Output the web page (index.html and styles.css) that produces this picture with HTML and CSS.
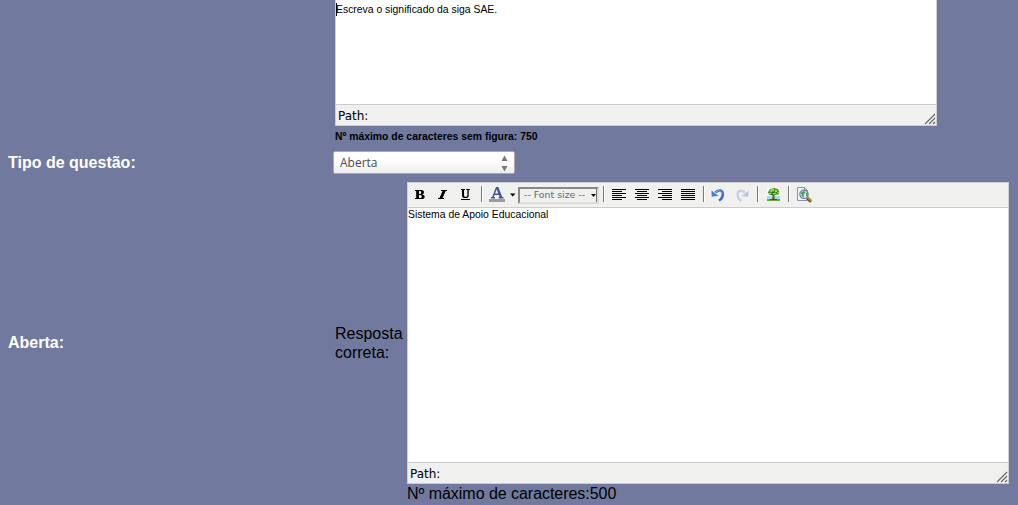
FILE: index.html
```
<!DOCTYPE html>
<html lang="pt-BR">
<head>
<meta charset="utf-8">
<title>Questão</title>
<link rel="stylesheet" href="styles.css">
</head>
<body>
<main class="form">
  <section class="row row-question">
    <div class="label"></div>
    <div class="field">
      <div class="editor editor-question">
        <div class="content"><span class="caret"></span>Escreva o significado da siga SAE.</div>
        <div class="status"><span>Path:</span>
          <svg class="grip" width="12" height="12" viewBox="0 0 12 12"><path d="M0 11L10 1M4 11L10 5M8 11L10 9" stroke="#fff"/><path d="M1 11L11 1M5 11L11 5M9 11L11 9" stroke="#666" stroke-width="1.2"/></svg>
        </div>
      </div>
      <div class="limit-small">Nº máximo de caracteres sem figura: 750</div>
    </div>
  </section>
  <section class="row row-type">
    <div class="label">Tipo de questão:</div>
    <div class="field">
      <div class="select"><span>Aberta</span>
        <svg width="7" height="17" viewBox="0 0 7 17"><path d="M.5 6L3.5 0.5L6.5 6zM.5 11L3.5 16.5L6.5 11z" fill="#777"/></svg>
      </div>
    </div>
  </section>
  <section class="row row-answer">
    <div class="label">Aberta:</div>
    <div class="field answer">
      <div class="answer-label">Resposta correta:</div>
      <div class="answer-body">
        <div class="editor editor-answer">
          <div class="toolbar">
            <svg class="btn" viewBox="0 0 23 24"><path fill-rule="evenodd" d="M7 7H13Q16 7 16 9.3Q16 11 14.2 11.4Q16.7 11.7 16.7 13.7Q16.7 16 13.3 16H7V15H8.2V8H7zM11 8V11H12Q13.3 11 13.3 9.5Q13.3 8 12 8zM11 12V15H12.2Q13.8 15 13.8 13.5Q13.8 12 12.2 12z"/></svg>
            <svg class="btn" viewBox="0 0 23 24"><path d="M10 7H16V8H14.6L11.6 15H13V16H7V15H8.5L11.5 8H10z"/></svg>
            <svg class="btn" viewBox="0 0 23 24"><path d="M7 6H11V7H10V12.2Q10 14 11.8 14Q13.4 14 13.4 12.2V7H12.3V6H15.8V7H14.7V12.4Q14.7 15 11.5 15Q8 15 8 12.4V7H7zM7 16H16V17H7z"/></svg>
            <i class="sep sep-wide"></i>
            <svg class="btn" viewBox="0 0 23 24"><path fill="#9c9c9c" d="M4 16H20V19H4z"/><path fill="#3b5592" fill-rule="evenodd" d="M11 4H13.3L17.2 14H18.5V15.5H13.7V14H14.6L13.9 12H9.5L8.8 14H10V15.5H6V14H7.2zM10 10.5H13.3L11.7 6.2z"/></svg>
            <svg class="drop" viewBox="0 0 10 24"><path d="M2 10.5H7.5L4.7 13.5z"/></svg>
            <div class="font-size"><span>-- Font size --</span><svg width="5" height="3" viewBox="0 0 5 3"><path d="M0 0H5L2.5 3z"/></svg></div>
            <i class="sep sep-wide sep-align"></i>
            <svg class="btn" viewBox="0 0 23 24" shape-rendering="crispEdges"><path d="M4 6.5H18M4 8.5H14M4 10.5H18M4 12.5H14M4 14.5H18M4 16.5H14" stroke="#000"/></svg>
            <svg class="btn" viewBox="0 0 23 24" shape-rendering="crispEdges"><path d="M4 6.5H18M6 8.5H16M4 10.5H18M6 12.5H16M4 14.5H18M6 16.5H16" stroke="#000"/></svg>
            <svg class="btn" viewBox="0 0 23 24" shape-rendering="crispEdges"><path d="M4 6.5H18M8 8.5H18M4 10.5H18M8 12.5H18M4 14.5H18M8 16.5H18" stroke="#000"/></svg>
            <svg class="btn" viewBox="0 0 23 24" shape-rendering="crispEdges"><path d="M4 6.5H18M4 8.5H18M4 10.5H18M4 12.5H18M4 14.5H18M4 16.5H18" stroke="#000"/></svg>
            <i class="sep"></i>
            <svg class="btn" viewBox="0 0 23 24"><path d="M8.5 9.5C11.5 6 15.8 7.3 15.8 11.2C15.8 14 14.5 16 12 17.5" fill="none" stroke="#3c6bc4" stroke-width="2.6"/><path d="M9 9C11.5 6.7 15 7.7 15 11" fill="none" stroke="#83aaf0"/><path fill="#4c7cd3" d="M4.5 7.5L11.5 12.8L4.7 13.8z"/></svg>
            <svg class="btn" viewBox="0 0 23 24"><path d="M15 9.8C12 6.3 7.5 7.5 7.5 11.5C7.5 14.5 9 16.5 11.5 18" fill="none" stroke="#c3cfe3" stroke-width="2.2"/><path fill="#b5c5df" d="M18.5 8L11.5 13L18.3 13.8z"/></svg>
            <i class="sep sep-redo"></i>
            <svg class="btn" viewBox="0 0 23 24"><path fill="#fff" d="M5 5H18V18H5z"/><path fill="#a9d9f5" d="M5 13H18V16H5z"/><path fill="#62ad2f" d="M5 16H18V18H5z"/><path fill="#7d4e24" d="M10.5 11H12.5V15L13.5 16.5H9.5L10.5 15z"/><path fill="#4c9c20" d="M8 6L12 5L16 6L17.5 9L16.5 11.5L13 12L10.5 12.5L7 11.5L5.8 9.5z"/><path fill="#9bdc46" d="M9 6H12V8H10V9H8zM13 7H15V9H13zM11 10H14V11H11zM7 10H9V11H7zM16 9H17V10H15z"/><path fill="#29670c" d="M10 9H12V10H10zM14 9H15V10H14zM9 11H11V12H9zM8 16H15V17H8z"/></svg>
            <i class="sep"></i>
            <svg class="btn btn-preview" viewBox="0 0 23 24"><path fill="#e9f1fa" stroke="#8a96a7" d="M4.5 4.5H11.5L14.5 7.5V17.5H4.5z"/><path fill="#dce5ef" stroke="#8a96a7" d="M11.5 4.500V7.500H14.500z"/><path stroke="#c98c3d" stroke-width="3" stroke-linecap="round" d="M14.500 14.500L17.500 17.500"/><path stroke="#5d4932" stroke-width="1.400" d="M13.500 15.500L17.500 19.300"/><circle cx="11" cy="11.300" r="4.200" fill="#cfe8f5" stroke="#71859c" stroke-width="1.200"/><path fill="#4b9a55" d="M8 9.500L11 8L12.500 9L10.500 11.500L11 14.500L9 13.500zM13 9.500L14.700 10V12.500L13 13.500z"/></svg>
          </div>
          <div class="content">Sistema de Apoio Educacional</div>
          <div class="status"><span>Path:</span>
            <svg class="grip" width="12" height="12" viewBox="0 0 12 12"><path d="M0 11L10 1M4 11L10 5M8 11L10 9" stroke="#fff"/><path d="M1 11L11 1M5 11L11 5M9 11L11 9" stroke="#666" stroke-width="1.2"/></svg>
          </div>
        </div>
        <div class="limit">Nº máximo de caracteres:500</div>
      </div>
    </div>
  </section>
</main>
</body>
</html>
```
FILE: styles.css
```
* { box-sizing: border-box; }
body {
  margin: 0;
  height: 505px;
  overflow: hidden;
  background: #717a9e;
  font: 16px/19px "Liberation Sans", Arial, sans-serif;
  color: #000;
}
.row { display: grid; grid-template-columns: 335px 1fr; align-items: center; }
.row-question { height: 147px; align-items: start; }
.row-type { height: 31px; }
.row-answer { height: 327px; }
.label { padding-left: 8px; font-weight: bold; color: #fff; }
.row-answer .label { padding-top: 1px; }
.editor {
  display: flex;
  flex-direction: column;
  width: 602px;
  border: 1px solid #ccc;
  background: #fff;
}
.editor-question { height: 126px; border-top: 0; }
.editor-answer { height: 302px; }
.content { flex: 1; font-size: 10.4px; line-height: 12px; }
.editor-question .content { padding-top: 4px; }
.editor-answer .content { padding-top: 1px; }
.caret { display: inline-block; width: 1px; height: 13px; margin: -1px -1px -3px 0; background: #000; }
.status {
  display: flex;
  justify-content: space-between;
  align-items: center;
  height: 21px;
  padding: 1px 0 0 2px;
  border-top: 1px solid #ccc;
  background: #f0f0ee;
  font: 12px/16px "DejaVu Sans", sans-serif;
}
.grip { margin: 6px 0 0; }
.limit-small { padding-top: 4px; font-size: 10.4px; line-height: 13px; font-weight: bold; }
.select {
  display: flex;
  align-items: center;
  justify-content: space-between;
  width: 182px;
  height: 23px;
  margin-left: -2px;
  padding: 0 6px;
  border: 1px solid #aaa;
  border-radius: 2px;
  background: linear-gradient(#fff 45%, #ececec);
  color: #4c4c4c;
  font: 12px/20px "Open Sans", sans-serif;
}
.select svg { margin-top: 2px; }
.answer { display: flex; align-items: center; }
.answer-label { width: 72px; padding-top: 3px; }
.answer-body { padding-top: 2px; }
.toolbar {
  display: flex;
  align-items: center;
  height: 25px;
  border-bottom: 1px solid #ccc;
  background: #f0f0ee;
}
.btn { flex: none; width: 23px; height: 24px; }
.btn-preview { margin-left: 1px; }
.drop { flex: none; width: 10px; height: 24px; }
.sep {
  flex: none;
  width: 2px;
  height: 16px;
  margin: 0 2px 3px 3px;
  border-left: 1px solid #777;
  border-right: 1px solid #fff;
}
.sep-wide { margin: 0 2px 3px 4px; }
.sep-align { margin-right: 3px; }
.sep-redo { margin-left: 4px; margin-right: 3px; }
.font-size {
  display: flex;
  align-items: center;
  justify-content: space-between;
  width: 81px;
  height: 17px;
  padding: 0 0 0 4px;
  border: 2px solid;
  border-color: #888 #ddd #ddd #888;
  color: #666;
  font: 9.4px/13px "DejaVu Sans", sans-serif;
  white-space: nowrap;
}
.font-size span { margin-top: -1px; }
.font-size svg { box-sizing: content-box; padding: 5px 0; border-right: 1px solid #777; }
.limit { line-height: 19px; letter-spacing: -0.04px; }
```
